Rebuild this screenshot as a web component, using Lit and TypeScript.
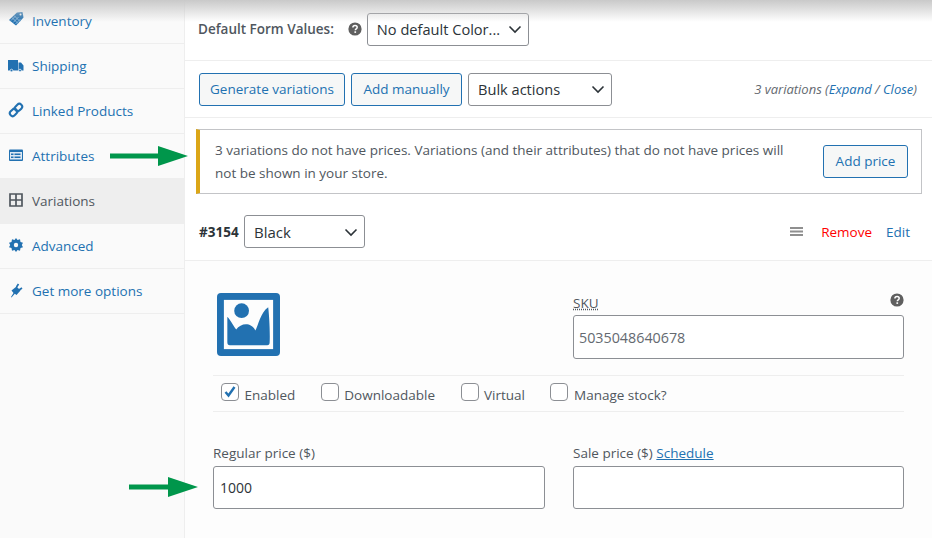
import { LitElement, html, css, svg } from 'lit';
import { customElement } from 'lit/decorators.js';

const chevron = html`<svg class="chev" width="16" height="16" viewBox="0 0 16 16"><path d="M2.500 5.500 8 11l5.500-5.500" fill="none" stroke="#2c3338" stroke-width="1.600"/></svg>`;

const help = (cls: string) => html`<svg class=${cls} width="14" height="14" viewBox="0 0 14 14">
  <circle cx="7" cy="7" r="6.600" fill="#5f5f5f"/>
  <path d="M4.900 5.500C4.900 4.200 5.900 3.400 7.100 3.400c1.200 0 2.100.8 2.100 1.900 0 1.700-1.900 1.600-1.900 3" fill="none" stroke="#fff" stroke-width="1.500"/>
  <rect x="6.400" y="9.300" width="1.700" height="1.600" fill="#fff"/>
</svg>`;

const arrow = (w: number) => html`<svg width=${w} height="20" viewBox="0 0 ${w} 20">
  <path d="M0 7.500H${w - 30}L${w - 30} 0 ${w} 10 ${w - 30} 20 ${w - 30} 12.500H0Z" fill="#00964b"/>
</svg>`;

const icons: Record<string, unknown> = {
  tag: svg`<path d="M1 9 9 1.500 14.500 1 15.500 6.500 8 14.500Z" fill="#2271b1"/><path d="M4 6.500 10 12.500M6 4.500 12 10.500M3 9.500 7 5.500M5.200 11.500 10.500 6M7.500 13 12.500 8" stroke="#9cc0dd" stroke-width=".8"/><circle cx="12.500" cy="3.600" r="1" fill="#fafafa"/>`,
  truck: svg`<path d="M0 3h10v10.500H0ZM10.500 5.500h2.500L15.500 8.500v5h-5Z" fill="#2271b1"/><circle cx="3.500" cy="13.500" r="1.300" fill="#2271b1" stroke="#fafafa" stroke-width=".7"/><circle cx="12" cy="13.500" r="1.300" fill="#2271b1" stroke="#fafafa" stroke-width=".7"/>`,
  link: svg`<g fill="none" stroke="#2271b1" stroke-width="2.100" transform="rotate(-45 8 8)"><rect x=".5" y="5.200" width="8" height="5.600" rx="2.800"/><rect x="7.500" y="5.200" width="8" height="5.600" rx="2.800"/></g>`,
  card: svg`<rect x="1" y="2.500" width="14" height="11.500" rx="1" fill="#2271b1"/><rect x="2" y="5" width="12" height="7.500" fill="#dfe9f3"/><path d="M3 6.500h2.500V8H3ZM6.500 6.500h6V8h-6ZM3 9.500h2.500V11H3ZM6.500 9.500h6V11h-6Z" fill="#2271b1"/>`,
  grid: svg`<path d="M2 2h12v12H2ZM8 2v12M2 8h12" fill="none" stroke="#50575e" stroke-width="1.700"/>`,
  gear: svg`<path d="M8 1 9.500 3 12 2.300 12.500 4.900 15 5.700 13.800 8 15 10.300 12.500 11.100 12 13.700 9.500 13 8 15 6.500 13 4 13.700 3.500 11.100 1 10.300 2.200 8 1 5.700 3.500 4.900 4 2.300 6.500 3Z" fill="#2271b1"/><circle cx="8" cy="8" r="2.200" fill="#fafafa"/>`,
  plug: svg`<path d="M3 15 5.500 11 3.500 8.500 8.500 4.500 12.500 8.500 8.500 13 6.800 11.800 3.500 15.500Z" fill="#2271b1"/><path d="M8.500 5 10.500 2M11 8 14 6" stroke="#2271b1" stroke-width="1.700"/>`,
};

const tabs = [
  { label: 'Inventory', icon: 'tag' },
  { label: 'Shipping', icon: 'truck' },
  { label: 'Linked Products', icon: 'link' },
  { label: 'Attributes', icon: 'card' },
  { label: 'Variations', icon: 'grid', active: true },
  { label: 'Advanced', icon: 'gear' },
  { label: 'Get more options', icon: 'plug' },
];

@customElement('app-root')
export class AppRoot extends LitElement {
  static styles = css`
    :host {
      display: block;
      position: relative;
      width: 932px;
      height: 538px;
      overflow: hidden;
      background: #fff;
      font-family: 'Open Sans', 'Noto Sans', sans-serif;
      font-size: 13.500px;
      color: #50575e;
    }
    a { color: #2271b1; text-decoration: none; }
    .layout { display: flex; height: 538px; }

    .side {
      width: 184px;
      flex: none;
      background: #fafafa;
      border-right: 1px solid #eee;
    }
    .tab {
      display: flex;
      align-items: center;
      gap: 8px;
      height: 45px;
      box-sizing: border-box;
      padding-left: 8px;
      border-bottom: 1px solid #eee;
      color: #2271b1;
    }
    .tab:first-child { height: 44px; padding-bottom: 2px; }
    .tab.active { background: #eee; color: #50575e; }
    .tab svg { flex: none; margin-top: -3px; }

    .main { flex: 1; min-width: 0; display: flex; flex-direction: column; }
    .defaults {
      display: flex;
      align-items: center;
      height: 61px;
      box-sizing: border-box;
      padding: 0 0 2px 13px;
      border-bottom: 1px solid #eee;
    }
    .defaults strong { font-weight: 600; margin-right: 14px; }
    .defaults .q { margin-right: 5px; }
    .toolbar {
      display: flex;
      align-items: center;
      height: 57px;
      box-sizing: border-box;
      padding: 0 15px 0 14px;
      border-bottom: 1px solid #eee;
    }
    .btn {
      display: flex;
      align-items: center;
      justify-content: center;
      height: 33px;
      box-sizing: border-box;
      border: 1px solid #2271b1;
      border-radius: 3px;
      background: #f6f7f7;
      color: #2271b1;
      font-size: 13.500px;
    }
    .gen { width: 146px; margin-right: 6px; }
    .man { width: 111px; margin-right: 6px; }
    .count { margin-left: auto; font-size: 13px; font-style: italic; color: #646970; }

    .select {
      display: flex;
      align-items: center;
      justify-content: space-between;
      height: 33px;
      box-sizing: border-box;
      padding: 0 5px 0 9px;
      border: 1px solid #8c8f94;
      border-radius: 3px;
      background: #fff;
      color: #2c3338;
      font-size: 14.600px;
    }
    .select.color { width: 162px; }
    .select.bulk { width: 144px; }
    .select.black { width: 121px; font-size: 15px; }

    .notice {
      display: flex;
      align-items: center;
      justify-content: space-between;
      height: 65px;
      box-sizing: border-box;
      margin: 11px 10px 0 11px;
      padding: 0 14px 0 15px;
      background: #fff;
      border: 1px solid #c3c4c7;
      border-left: 4px solid #dba617;
      line-height: 23px;
    }
    .notice p { margin: 0; width: 575px; }
    .notice .btn { width: 85px; margin-right: -1px; }

    .head {
      display: flex;
      align-items: center;
      height: 67px;
      box-sizing: border-box;
      padding: 9px 22px 0 14px;
      border-bottom: 1px solid #eee;
    }
    .head strong { font-weight: 700; color: #2c3338; width: 45px; flex: none; font-size: 13.500px; }
    .handle { margin-left: auto; margin-right: 18px; }
    .remove { color: #f00; margin-right: 14px; }

    .body {
      flex: 1;
      background: #fdfdfd;
      padding: 32px 28px 0;
    }
    .top { display: grid; grid-template-columns: 332px 331px; column-gap: 28px; height: 82px; }
    .thumb { display: block; margin-left: 4px; }
    .sku-col { position: relative; padding-top: 2px; }
    .sku-col label { display: block; height: 20px; line-height: 17px; }
    .sku-col abbr { text-decoration: underline dotted; }
    .q-right { position: absolute; right: 0; top: 0; }
    .field {
      display: block;
      width: 100%;
      box-sizing: border-box;
      border: 1px solid #8c8f94;
      border-radius: 3px;
      background: #fff;
      padding: 0 6px;
      font: inherit;
      font-size: 14px;
      outline: none;
    }
    .sku { height: 44px; color: #646970; font-size: 14.300px; padding: 0 5px; }
    .price { height: 43px; color: #2c3338; }

    .options {
      display: flex;
      align-items: center;
      height: 37px;
      box-sizing: border-box;
      padding: 1px 0 0 8px;
      border-top: 1px solid #eee;
      border-bottom: 1px solid #eee;
    }
    .opt { display: flex; align-items: center; gap: 5.500px; margin-right: 25.500px; }
    .box {
      width: 18px;
      height: 18px;
      margin-top: -5px;
      box-sizing: border-box;
      border: 1px solid #8c8f94;
      border-radius: 4px;
      background: #fff;
    }
    .box svg { display: block; }
    .opt span { margin-top: 2px; }

    .prices {
      display: grid;
      grid-template-columns: 332px 331px;
      column-gap: 28px;
      padding-top: 31px;
    }
    .prices label { display: block; height: 23px; line-height: 20px; }
    .prices a { text-decoration: underline; }

    .shade {
      position: absolute;
      inset: 0 0 auto 0;
      height: 22px;
      background: linear-gradient(#c9c9c9, rgba(255, 255, 255, 0));
      pointer-events: none;
    }
    .arrow { position: absolute; display: block; line-height: 0; }
    .arrow.one { left: 110px; top: 146px; }
    .arrow.two { left: 129px; top: 477px; }
  `;

  render() {
    return html`
      <div class="layout">
        <div class="side">
          ${tabs.map((t) => html`
            <div class="tab ${t.active ? 'active' : ''}">
              <svg width="16" height="16" viewBox="0 0 16 16">${icons[t.icon]}</svg>
              <span>${t.label}</span>
            </div>
          `)}
        </div>
        <div class="main">
          <div class="defaults">
            <strong>Default Form Values:</strong>
            ${help('q')}
            <div class="select color"><span>No default Color...</span>${chevron}</div>
          </div>
          <div class="toolbar">
            <div class="btn gen">Generate variations</div>
            <div class="btn man">Add manually</div>
            <div class="select bulk"><span>Bulk actions</span>${chevron}</div>
            <div class="count">3 variations (<a>Expand</a> / <a>Close</a>)</div>
          </div>
          <div class="notice">
            <p>3 variations do not have prices. Variations (and their attributes) that do not have prices will not be shown in your store.</p>
            <div class="btn">Add price</div>
          </div>
          <div class="head">
            <strong>#3154</strong>
            <div class="select black"><span>Black</span>${chevron}</div>
            <svg class="handle" width="13" height="11" viewBox="0 0 13 11"><path d="M0 1h13v2H0ZM0 4.500h13v2H0ZM0 8h13v2H0Z" fill="#8f8f8f"/></svg>
            <a class="remove">Remove</a>
            <a>Edit</a>
          </div>
          <div class="body">
            <div class="top">
              <svg class="thumb" width="63" height="63" viewBox="0 0 64 64">
                <rect width="64" height="64" rx="4" fill="#2271b1"/>
                <rect x="7" y="7" width="50" height="50" fill="#fdfdfd"/>
                <circle cx="25" cy="18" r="7.500" fill="#2271b1"/>
                <path d="M10.500 24C15 29 17 34 19.500 37 24 31 34 29 39 38 42 33 44 20 52 14.500 53 22 54 40 53.500 50Q53.500 53 51 53H13Q10.500 53 10.500 50Z" fill="#2271b1"/>
              </svg>
              <div class="sku-col">
                <label><abbr>SKU</abbr></label>
                ${help('q-right')}
                <input class="field sku" .value=${'5035048640678'} />
              </div>
            </div>
            <div class="options">
              <div class="opt">
                <div class="box"><svg width="16" height="16" viewBox="0 0 16 16"><path d="M3.500 8 6.500 11.500 12.500 3" fill="none" stroke="#2271b1" stroke-width="2.400"/></svg></div>
                <span>Enabled</span>
              </div>
              <div class="opt"><div class="box"></div><span>Downloadable</span></div>
              <div class="opt"><div class="box"></div><span>Virtual</span></div>
              <div class="opt"><div class="box"></div><span>Manage stock?</span></div>
            </div>
            <div class="prices">
              <div>
                <label>Regular price ($)</label>
                <input class="field price" .value=${'1000'} />
              </div>
              <div>
                <label>Sale price ($) <a>Schedule</a></label>
                <input class="field price" />
              </div>
            </div>
          </div>
        </div>
      </div>
      <div class="shade"></div>
      <div class="arrow one">${arrow(78)}</div>
      <div class="arrow two">${arrow(69)}</div>
    `;
  }
}
